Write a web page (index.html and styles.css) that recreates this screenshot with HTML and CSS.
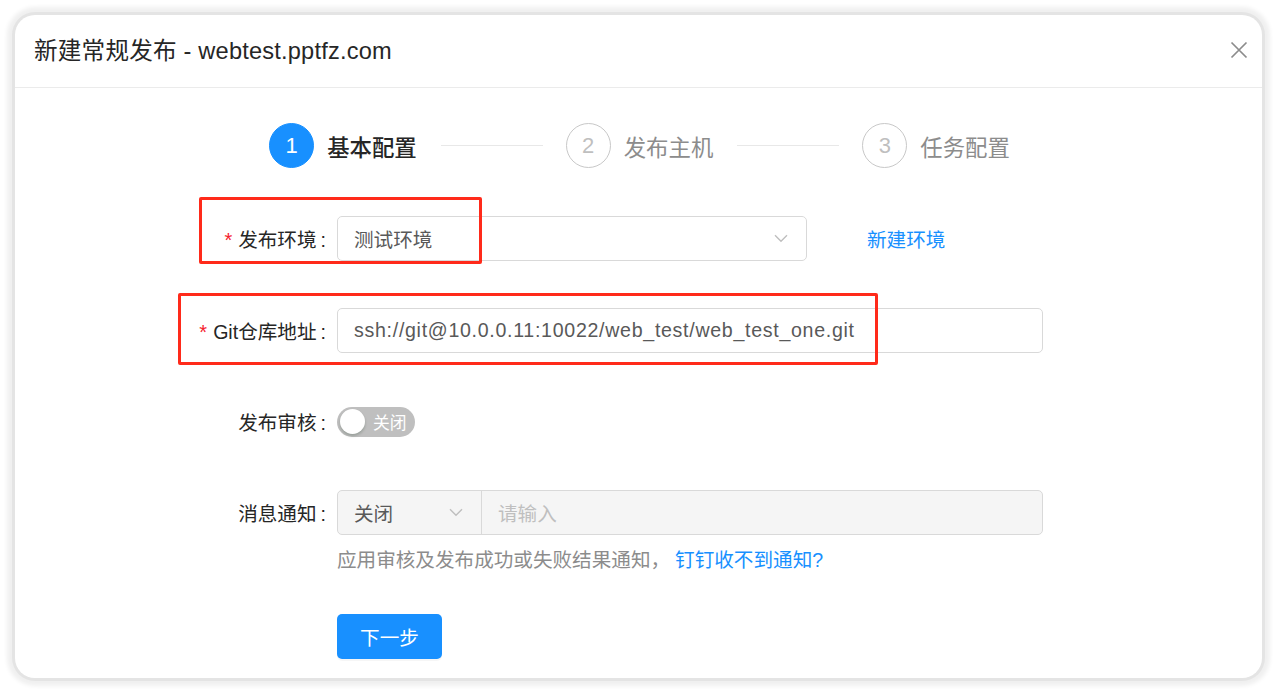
FILE: index.html
```html
<!DOCTYPE html>
<html lang="zh-CN">
<head>
<meta charset="utf-8">
<title>新建常规发布</title>
<link rel="stylesheet" href="styles.css">
</head>
<body>
<div class="frame">
  <div class="modal">
    <div class="modal-header">
      <div class="modal-title">新建常规发布 - webtest.pptfz.com</div>
      <svg class="close" width="18" height="18" viewBox="0 0 18 18"><path d="M1.5 1.5 L16.5 16.5 M16.5 1.5 L1.5 16.5" stroke="#8c8c8c" stroke-width="1.7" fill="none"/></svg>
    </div>
    <div class="modal-body">
      <div class="steps">
        <div class="step-icon active">1</div>
        <div class="step-title active">基本配置</div>
        <div class="step-line"></div>
        <div class="step-icon">2</div>
        <div class="step-title">发布主机</div>
        <div class="step-line"></div>
        <div class="step-icon">3</div>
        <div class="step-title">任务配置</div>
      </div>

      <div class="form">
        <div class="row row-env">
          <label class="label"><span class="star">*</span>发布环境<span class="colon">:</span></label>
          <div class="control">
            <div class="select select-env">
              <span class="value">测试环境</span>
              <svg class="arrow" width="14" height="9" viewBox="0 0 14 9"><path d="M1 1.2 L7 7.2 L13 1.2" stroke="#bfbfbf" stroke-width="1.4" fill="none"/></svg>
            </div>
            <a class="link new-env">新建环境</a>
          </div>
        </div>

        <div class="row row-git">
          <label class="label"><span class="star">*</span>Git仓库地址<span class="colon">:</span></label>
          <div class="control">
            <div class="input input-git"><span class="value">ssh://git@10.0.0.11:10022/web_test/web_test_one.git</span></div>
          </div>
        </div>

        <div class="row row-switch">
          <label class="label">发布审核<span class="colon">:</span></label>
          <div class="control">
            <div class="switch"><span class="knob"></span><span class="switch-text">关闭</span></div>
          </div>
        </div>

        <div class="row row-notify">
          <label class="label">消息通知<span class="colon">:</span></label>
          <div class="control">
            <div class="group">
              <div class="group-select">
                <span class="value">关闭</span>
                <svg class="arrow" width="14" height="9" viewBox="0 0 14 9"><path d="M1 1.2 L7 7.2 L13 1.2" stroke="#bfbfbf" stroke-width="1.4" fill="none"/></svg>
              </div>
              <div class="group-input">请输入</div>
            </div>
          </div>
        </div>

        <div class="row row-help">
          <div class="label"></div>
          <div class="help">应用审核及发布成功或失败结果通知，<a class="link help-link">钉钉收不到通知?</a></div>
        </div>

        <div class="row row-btn">
          <div class="label"></div>
          <div class="control"><button class="btn">下一步</button></div>
        </div>
      </div>
    </div>
    <div class="mark mark-env"></div>
    <div class="mark mark-git"></div>
  </div>
</div>
</body>
</html>
```

FILE: styles.css
```css
* { box-sizing: border-box; }
html, body { margin: 0; padding: 0; background: #ffffff; }
body {
  font-family: "Liberation Sans", "Noto Sans CJK SC", sans-serif;
  color: #262626;
}
.frame {
  width: 1277px;
  height: 692px;
  padding: 15px 15px 14px 15px;
}
.modal {
  position: relative;
  width: 1247px;
  height: 663px;
  background: #ffffff;
  border-radius: 20px;
  box-shadow: 0 0 0 3px #e4e4e4, 0 0 4px 8px #f0f0f0;
  overflow: hidden;
}
.modal-header {
  height: 73px;
  padding: 0 14px 4px 19px;
  display: flex;
  align-items: center;
  justify-content: space-between;
  border-bottom: 1px solid #ebebeb;
}
.modal-title {
  font-size: 23.6px;
  color: #262626;
  letter-spacing: 0.2px;
}
.close { display: block; margin-top: 2px; }

.modal-body { padding-top: 35px; }

.steps {
  display: flex;
  align-items: center;
  justify-content: center;
  padding-left: 2px;
  height: 45px;
}
.step-icon {
  width: 45px;
  height: 45px;
  border-radius: 50%;
  border: 1.5px solid #c8c8c8;
  color: #bfbfbf;
  font-size: 22px;
  display: flex;
  align-items: center;
  justify-content: center;
  margin-right: 13px;
}
.step-icon.active {
  background: #1890ff;
  border-color: #1890ff;
  color: #ffffff;
}
.step-title {
  font-size: 22.4px;
  color: #8c8c8c;
}
.step-title.active { color: #262626; font-weight: 500; }
.step-line {
  width: 102px;
  height: 1px;
  background: #e8e8e8;
  margin: 0 23px 0 24px;
}

.form { margin-top: 48px; }
.row {
  display: grid;
  grid-template-columns: 322px 1fr;
  align-items: center;
  min-height: 45px;
}
.row-git { margin-top: 47px; }
.row-switch { margin-top: 46px; }
.row-notify { margin-top: 46px; }
.row-help { margin-top: 9px; min-height: 28px; }
.row-btn { margin-top: 41px; }

.label {
  text-align: right;
  padding-right: 0;
  font-size: 19.6px;
  color: #262626;
  white-space: nowrap;
}
.colon {
  display: inline-block;
  margin: 0 11px 0 4px;
  font-family: "Liberation Sans", sans-serif;
}
.star {
  color: #f5222d;
  font-size: 20px;
  margin-right: 6px;
  font-family: "Liberation Sans", sans-serif;
}
.control { display: flex; align-items: center; }
.select, .input {
  height: 45px;
  border: 1px solid #d9d9d9;
  border-radius: 5px;
  background: #ffffff;
  display: flex;
  align-items: center;
  padding-left: 16px;
  font-size: 19.6px;
  color: #595959;
}
.select-env {
  width: 470px;
  justify-content: space-between;
  padding-right: 18px;
}
.input-git { width: 706px; letter-spacing: 0.7px; }
.link { color: #1890ff; font-size: 19.6px; cursor: pointer; }
.new-env { margin-left: 60px; }
.help-link { margin-left: 5px; }

.switch {
  position: relative;
  width: 78px;
  height: 30px;
  border-radius: 15px;
  background: #bfbfbf;
  display: flex;
  align-items: center;
}
.knob {
  position: absolute;
  left: 3px;
  top: 2.5px;
  width: 25px;
  height: 25px;
  border-radius: 50%;
  background: #ffffff;
  box-shadow: 0 2px 3px rgba(0, 35, 11, 0.2);
}
.switch-text {
  color: #ffffff;
  font-size: 16.8px;
  margin-left: 36px;
}

.group {
  display: flex;
  width: 706px;
  height: 45px;
  border: 1px solid #d9d9d9;
  border-radius: 5px;
  background: #f5f5f5;
  overflow: hidden;
}
.group-select {
  width: 144px;
  display: flex;
  align-items: center;
  justify-content: space-between;
  padding: 0 18px 0 16px;
  border-right: 1px solid #d9d9d9;
  font-size: 19.6px;
  color: #595959;
}
.group-input {
  flex: 1;
  display: flex;
  align-items: center;
  padding-left: 16px;
  font-size: 19.6px;
  color: #bfbfbf;
}
.help {
  font-size: 19.6px;
  color: #8c8c8c;
}
.btn {
  width: 105px;
  height: 45px;
  border: none;
  border-radius: 5px;
  background: #1890ff;
  color: #ffffff;
  font-size: 19.6px;
  font-family: "Liberation Sans", "Noto Sans CJK SC", sans-serif;
  box-shadow: 0 2px 0 rgba(0, 0, 0, 0.035);
}

.mark {
  position: absolute;
  border: 3.5px solid #ff2a1a;
  border-radius: 2px;
}
.mark-env { left: 184px; top: 182px; width: 283px; height: 67px; }
.mark-git { left: 163px; top: 278px; width: 700px; height: 72px; }
```
